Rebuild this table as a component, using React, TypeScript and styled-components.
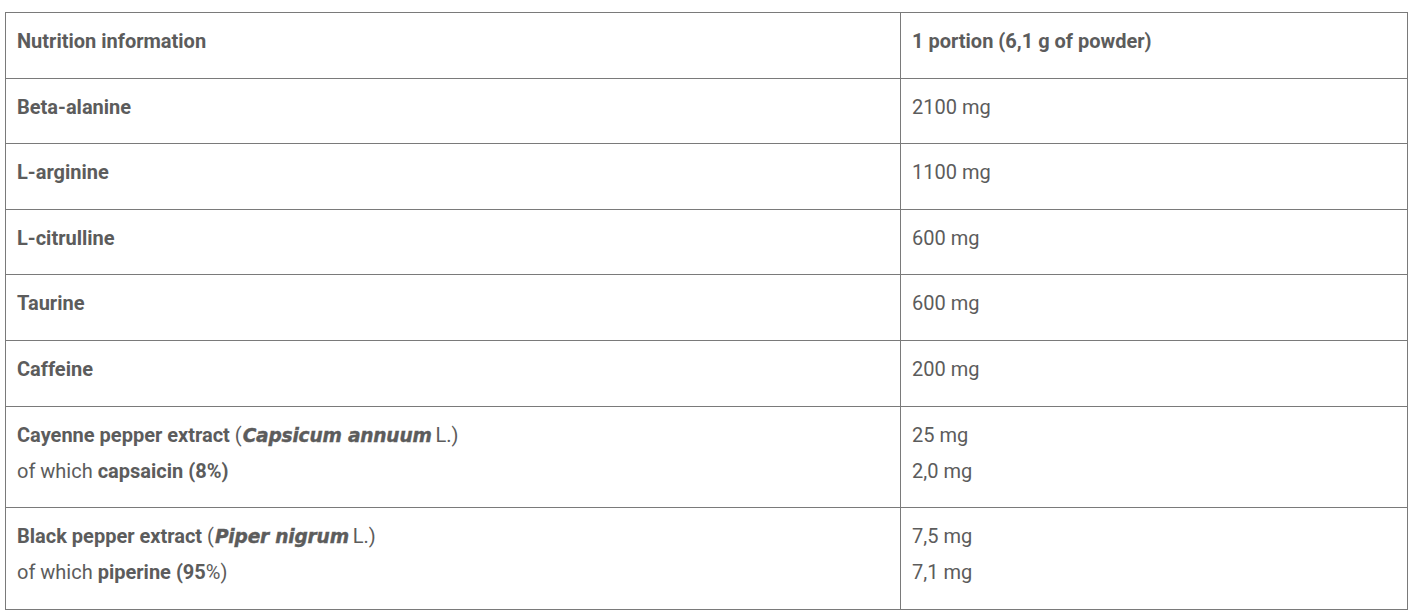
import React from 'react';
import styled, { createGlobalStyle } from 'styled-components';

const GlobalStyle = createGlobalStyle`
  body {
    margin: 0;
    background: #fff;
    font-family: Roboto, "Liberation Sans", sans-serif;
  }
`;

const Page = styled.div`
  padding: 12px 4px 6px 5px;
`;

const Table = styled.table`
  width: 1403px;
  border-collapse: collapse;
  table-layout: fixed;
  color: #5c5c5c;
  font-size: 20px;
  line-height: 36px;
`;

const Cell = styled.td<{ $head?: boolean }>`
  border: 1px solid #7a7a7a;
  padding: 10px 11px 18.6px;
  vertical-align: top;
  font-weight: ${(p) => (p.$head ? 700 : 400)};
`;

const Line = styled.div`
  white-space: nowrap;
`;

const Strong = styled.strong`
  font-weight: 700;
`;

// botanical names: wide heavy italic
const Latin = styled.em`
  font-family: "DejaVu Sans", Roboto, sans-serif;
  font-weight: 700;
  font-style: italic;
  font-size: 18.6px;
  line-height: 1;
  letter-spacing: -0.2px;
  margin: 0 -1px 0 1px;
  -webkit-text-stroke: 0.4px #5c5c5c;
`;

type Row = {
  name: React.ReactNode;
  values: string[];
};

const rows: Row[] = [
  { name: <Strong>Beta-alanine</Strong>, values: ['2100 mg'] },
  { name: <Strong>L-arginine</Strong>, values: ['1100 mg'] },
  { name: <Strong>L-citrulline</Strong>, values: ['600 mg'] },
  { name: <Strong>Taurine</Strong>, values: ['600 mg'] },
  { name: <Strong>Caffeine</Strong>, values: ['200 mg'] },
  {
    name: (
      <>
        <Line>
          <Strong>Cayenne pepper extract</Strong> (<Latin>Capsicum annuum</Latin> L.)
        </Line>
        <Line>
          of which <Strong>capsaicin (8%)</Strong>
        </Line>
      </>
    ),
    values: ['25 mg', '2,0 mg'],
  },
  {
    name: (
      <>
        <Line>
          <Strong>Black pepper extract</Strong> (<Latin>Piper nigrum</Latin> L.)
        </Line>
        <Line>
          of which <Strong>piperine (95</Strong>%)
        </Line>
      </>
    ),
    values: ['7,5 mg', '7,1 mg'],
  },
];

const App = () => {
  return (
    <Page>
      <GlobalStyle />
      <Table>
        <colgroup>
          <col style={{ width: 895 }} />
          <col />
        </colgroup>
        <tbody>
          <tr>
            <Cell $head>Nutrition information</Cell>
            <Cell $head>1 portion (6,1 g of powder)</Cell>
          </tr>
          {rows.map((row, i) => (
            <tr key={i}>
              <Cell>{row.name}</Cell>
              <Cell>
                {row.values.map((v) => (
                  <Line key={v}>{v}</Line>
                ))}
              </Cell>
            </tr>
          ))}
        </tbody>
      </Table>
    </Page>
  );
};

export default App;
